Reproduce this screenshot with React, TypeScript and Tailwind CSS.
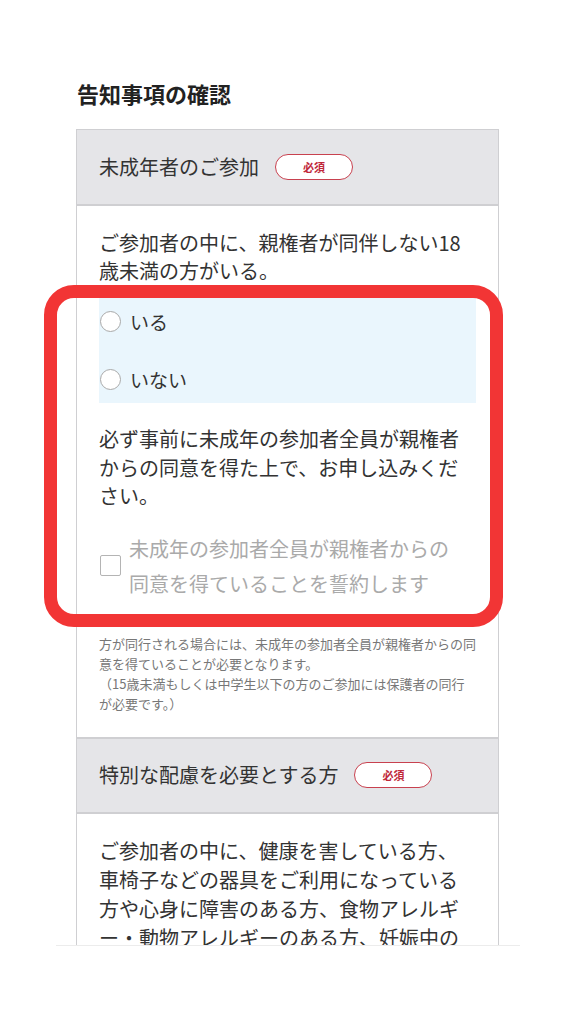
import React from "react";

const font = { fontFamily: '"Noto Sans CJK JP", "Noto Sans", sans-serif' };

function Badge() {
  return (
    <span className="inline-flex h-[26px] w-[78px] items-center justify-center rounded-full border-[1.5px] border-[#c8414f] bg-white text-[11px] font-bold leading-none text-[#c0283a]">
      必須
    </span>
  );
}

export default function App() {
  return (
    <div className="relative min-h-[1024px] w-[576px] bg-white text-[#333]" style={font}>
      <div className="h-[945px] overflow-hidden">
        <div className="pl-[77px] pt-[77px]">
          <h1 className="text-[22px] font-bold leading-[32px] text-[#222]">告知事項の確認</h1>
        </div>
        <div className="ml-[76px] mt-[20px] w-[423px] border-x border-t border-[#cfcfd2]">
          {/* section 1 header */}
          <div className="flex h-[76px] items-center gap-[16px] border-b-[2px] border-[#cfcfd2] bg-[#e5e5e8] px-[22px]">
            <span className="text-[20px] leading-[28px] text-[#333]">未成年者のご参加</span>
            <Badge />
          </div>
          {/* section 1 body */}
          <div className="px-[22px] pt-[23px] pb-[23px]">
            <p className="text-[20px] leading-[28px]">ご参加者の中に、親権者が同伴しない18歳未満の方がいる。</p>
            <div className="mt-[10px] flex flex-col gap-[29px] bg-[#eaf6fd] pt-[12px] pb-[9px]">
              <label className="flex h-[29px] items-center gap-[9px]">
                <span className="ml-[1px] h-[21px] w-[21px] rounded-full border border-[#a9a9a9] bg-white" />
                <span className="text-[19px] leading-[29px]">いる</span>
              </label>
              <label className="flex h-[29px] items-center gap-[9px]">
                <span className="ml-[1px] h-[21px] w-[21px] rounded-full border border-[#a9a9a9] bg-white" />
                <span className="text-[19px] leading-[29px]">いない</span>
              </label>
            </div>
            <p className="mt-[22px] text-[20px] leading-[28.5px]">
              必ず事前に未成年の参加者全員が親権者からの同意を得た上で、お申し込みください。
            </p>
            <div className="mt-[20px] flex items-center gap-[8px]">
              <span className="ml-[1px] h-[21px] w-[21px] shrink-0 rounded-[2px] border-[1.5px] border-[#b4b4b4] bg-white" />
              <span className="w-[330px] text-[20px] leading-[35px] text-[#aaaaaa]">
                未成年の参加者全員が親権者からの同意を得ていることを誓約します
              </span>
            </div>
            <p className="mt-[33px] text-[13px] leading-[20px] text-[#777]">
              方が同行される場合には、未成年の参加者全員が親権者からの同意を得ていることが必要となります。
              <br />
              （15歳未満もしくは中学生以下の方のご参加には保護者の同行が必要です。）
            </p>
          </div>
          {/* section 2 header */}
          <div className="flex h-[77px] items-center gap-[16px] border-y-[2px] border-[#cfcfd2] bg-[#e5e5e8] px-[22px]">
            <span className="text-[20px] leading-[28px] text-[#333]">特別な配慮を必要とする方</span>
            <Badge />
          </div>
          <div className="px-[22px] pt-[22px]">
            <p className="text-[20px] leading-[29px]">
              ご参加者の中に、健康を害している方、車椅子などの器具をご利用になっている方や心身に障害のある方、食物アレルギー・動物アレルギーのある方、妊娠中の方がいる。
            </p>
          </div>
        </div>
      </div>
      <div className="mx-[56px] h-px bg-[#ececec]" />
      {/* annotation overlay */}
      <div className="pointer-events-none absolute left-[44px] top-[285px] h-[342px] w-[459px] rounded-[30px] border-[13px] border-[#f23535]" />
    </div>
  );
}
